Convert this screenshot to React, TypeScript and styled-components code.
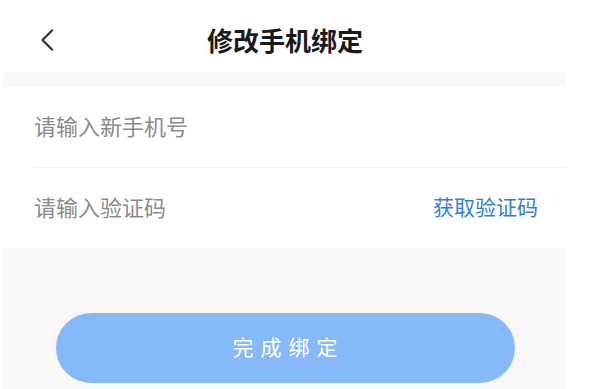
import React, { useState } from 'react';
import styled, { createGlobalStyle } from 'styled-components';

const GlobalStyle = createGlobalStyle`
  html, body {
    margin: 0;
    padding: 0;
    background: #ffffff;
    font-family: "Noto Sans CJK SC", "Noto Sans", sans-serif;
  }
`;

const Screen = styled.div`
  width: 562px;
  margin-left: 4px;
  height: 389px;
  display: flex;
  flex-direction: column;
  background: #ffffff;
`;

const Header = styled.div`
  box-sizing: border-box;
  height: 72px;
  padding: 8px 36px 0;
  display: grid;
  grid-template-columns: 1fr auto 1fr;
  align-items: center;
`;

const BackButton = styled.button`
  justify-self: start;
  width: 16px;
  height: 24px;
  padding: 0;
  border: none;
  background: none;
  display: flex;
  align-items: center;
  cursor: pointer;
`;

const Title = styled.h1`
  margin: 0;
  font-size: 26px;
  line-height: 30px;
  font-weight: 700;
  color: #1a1a1a;
`;

const Gap = styled.div`
  height: 15px;
  background: #f7f7f7;
`;

const Form = styled.div`
  display: flex;
  flex-direction: column;
`;

const Row = styled.div<{ $divider?: boolean }>`
  box-sizing: border-box;
  height: ${(p) => (p.$divider ? '81px' : '80px')};
  margin-left: 29px;
  padding: 0 28px 5px 1px;
  display: flex;
  align-items: center;
  justify-content: space-between;
  border-bottom: ${(p) => (p.$divider ? '1px solid #f1f1f1' : 'none')};
`;

const Field = styled.input`
  flex: 1;
  min-width: 0;
  border: none;
  outline: none;
  padding: 0;
  background: transparent;
  font-family: inherit;
  font-size: 22px;
  color: #333333;

  &::placeholder {
    color: #8a8a8a;
  }
`;

const CodeLink = styled.span`
  font-size: 21px;
  color: #2f7ee0;
  cursor: pointer;
`;

const Footer = styled.div`
  flex: 1;
  background: #f8f8f8;
  padding-top: 65px;
  display: flex;
  justify-content: center;
`;

const SubmitButton = styled.button`
  box-sizing: border-box;
  width: 459px;
  height: 70px;
  border: none;
  border-radius: 35px;
  background: #86b9fa;
  color: #ffffff;
  font-family: inherit;
  font-size: 21px;
  letter-spacing: 7px;
  padding: 0 0 4px 7px;
  cursor: pointer;
`;

const ChevronLeft = () => (
  <svg width="14" height="22" viewBox="0 0 14 22" fill="none">
    <polyline points="12,1.5 2.5,11 12,20.5" stroke="#333333" strokeWidth="2.2" strokeLinecap="round" strokeLinejoin="round" />
  </svg>
);

const App: React.FC = () => {
  const [phone, setPhone] = useState('');
  const [code, setCode] = useState('');

  return (
    <>
      <GlobalStyle />
      <Screen>
        <Header>
          <BackButton aria-label="返回">
            <ChevronLeft />
          </BackButton>
          <Title>修改手机绑定</Title>
          <div />
        </Header>
        <Gap />
        <Form>
          <Row $divider>
            <Field placeholder="请输入新手机号" value={phone} onChange={(e) => setPhone(e.target.value)} />
          </Row>
          <Row>
            <Field placeholder="请输入验证码" value={code} onChange={(e) => setCode(e.target.value)} />
            <CodeLink>获取验证码</CodeLink>
          </Row>
        </Form>
        <Footer>
          <SubmitButton>完成绑定</SubmitButton>
        </Footer>
      </Screen>
    </>
  );
};

export default App;
